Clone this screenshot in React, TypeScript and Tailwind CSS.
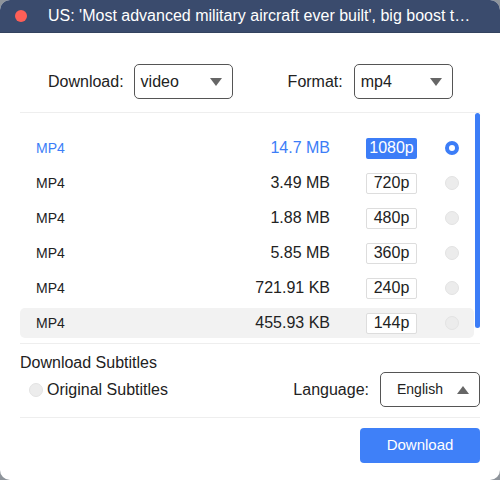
import React from "react";

const rows = [
  { size: "14.7 MB", res: "1080p", sel: true },
  { size: "3.49 MB", res: "720p" },
  { size: "1.88 MB", res: "480p" },
  { size: "5.85 MB", res: "360p" },
  { size: "721.91 KB", res: "240p" },
  { size: "455.93 KB", res: "144p", hover: true },
];

function Tri({ up }: { up?: boolean }) {
  return (
    <svg width="12" height="8" viewBox="0 0 12 8" className="shrink-0">
      {up ? <polygon points="6,0 12,8 0,8" fill="#666" /> : <polygon points="0,0 12,0 6,8" fill="#666" />}
    </svg>
  );
}

export default function App() {
  return (
    <div className="w-[500px] h-[480px] bg-[#8e949b]" style={{ fontFamily: '"Liberation Sans", Arial, sans-serif' }}>
      <div className="h-full rounded-[10px] bg-white overflow-hidden flex flex-col">
        <div className="h-[33px] shrink-0 bg-[#3a4b6d] border-b border-[#33425f] flex items-center pl-[15px]">
          <div className="w-[12px] h-[12px] rounded-full bg-[#fe5f57]" />
          <div className="ml-[21px] text-white text-[16px] leading-none whitespace-nowrap">
            US: 'Most advanced military aircraft ever built', big boost t…
          </div>
        </div>
        <div className="px-[20px] text-[#222]">
          <div className="flex items-center mt-[31px] pl-[28px] text-[16px]">
            <span>Download:</span>
            <div className="ml-[10px] w-[99px] h-[35px] border border-[#555] rounded-[5px] flex items-center justify-between pl-[6px] pr-[10px]">
              <span>video</span>
              <Tri />
            </div>
            <span className="ml-[55px]">Format:</span>
            <div className="ml-[11px] w-[99px] h-[35px] border border-[#555] rounded-[5px] flex items-center justify-between pl-[6px] pr-[10px]">
              <span>mp4</span>
              <Tri />
            </div>
          </div>
          <div className="mt-[13px] border-t border-[#eeeeee] relative pt-[20px] pb-[5px] flex flex-col gap-[5px]">
            <div className="absolute right-0 top-0 w-[5px] h-[215px] rounded-full bg-[#3c7df7]" />
            {rows.map((r) => (
              <div
                key={r.res}
                className={`h-[30px] mr-[6px] rounded-[5px] flex items-center pl-[16px] pr-[15px] ${r.hover ? "bg-[#f2f2f2]" : ""} ${r.sel ? "text-[#3c7df7]" : "text-[#222]"}`}
              >
                <span className="flex-1 text-[14px]">MP4</span>
                <span className="text-[16px]">{r.size}</span>
                <span
                  className={`ml-[36px] w-[51px] h-[21px] rounded-[2px] flex items-center justify-center text-[16px] ${r.sel ? "bg-[#3c7df7] text-white" : "border border-[#dddddd] bg-white text-[#222]"}`}
                >
                  {r.res}
                </span>
                <span className="ml-[28px] w-[14px] h-[14px] rounded-full flex items-center justify-center">
                  {r.sel ? (
                    <span className="w-[14px] h-[14px] rounded-full border-[4px] border-[#3c7df7] bg-white" />
                  ) : (
                    <span className="w-[14px] h-[14px] rounded-full bg-[#ececec] border border-[#e3e3e3]" />
                  )}
                </span>
              </div>
            ))}
          </div>
          <div className="border-t border-[#eeeeee] pt-[9px]">
            <div className="text-[16px] leading-[19px] text-[#222]">Download Subtitles</div>
            <div className="h-[35px] flex items-center">
              <span className="ml-[9px] w-[14px] h-[14px] rounded-full bg-[#ececec] border border-[#e3e3e3]" />
              <span className="ml-[4px] text-[16px]">Original Subtitles</span>
              <span className="ml-auto text-[16px]">Language:</span>
              <div className="ml-[11px] w-[100px] h-[35px] border border-[#555] rounded-[5px] flex items-center justify-between pl-[16px] pr-[10px]">
                <span className="text-[14px]">English</span>
                <Tri up />
              </div>
            </div>
          </div>
          <div className="mt-[10px] border-t border-[#eeeeee] pt-[10px] flex">
            <button className="ml-auto w-[120px] h-[35px] rounded-[4px] bg-[#3f80f8] text-white text-[15px]">
              Download
            </button>
          </div>
        </div>
      </div>
    </div>
  );
}
